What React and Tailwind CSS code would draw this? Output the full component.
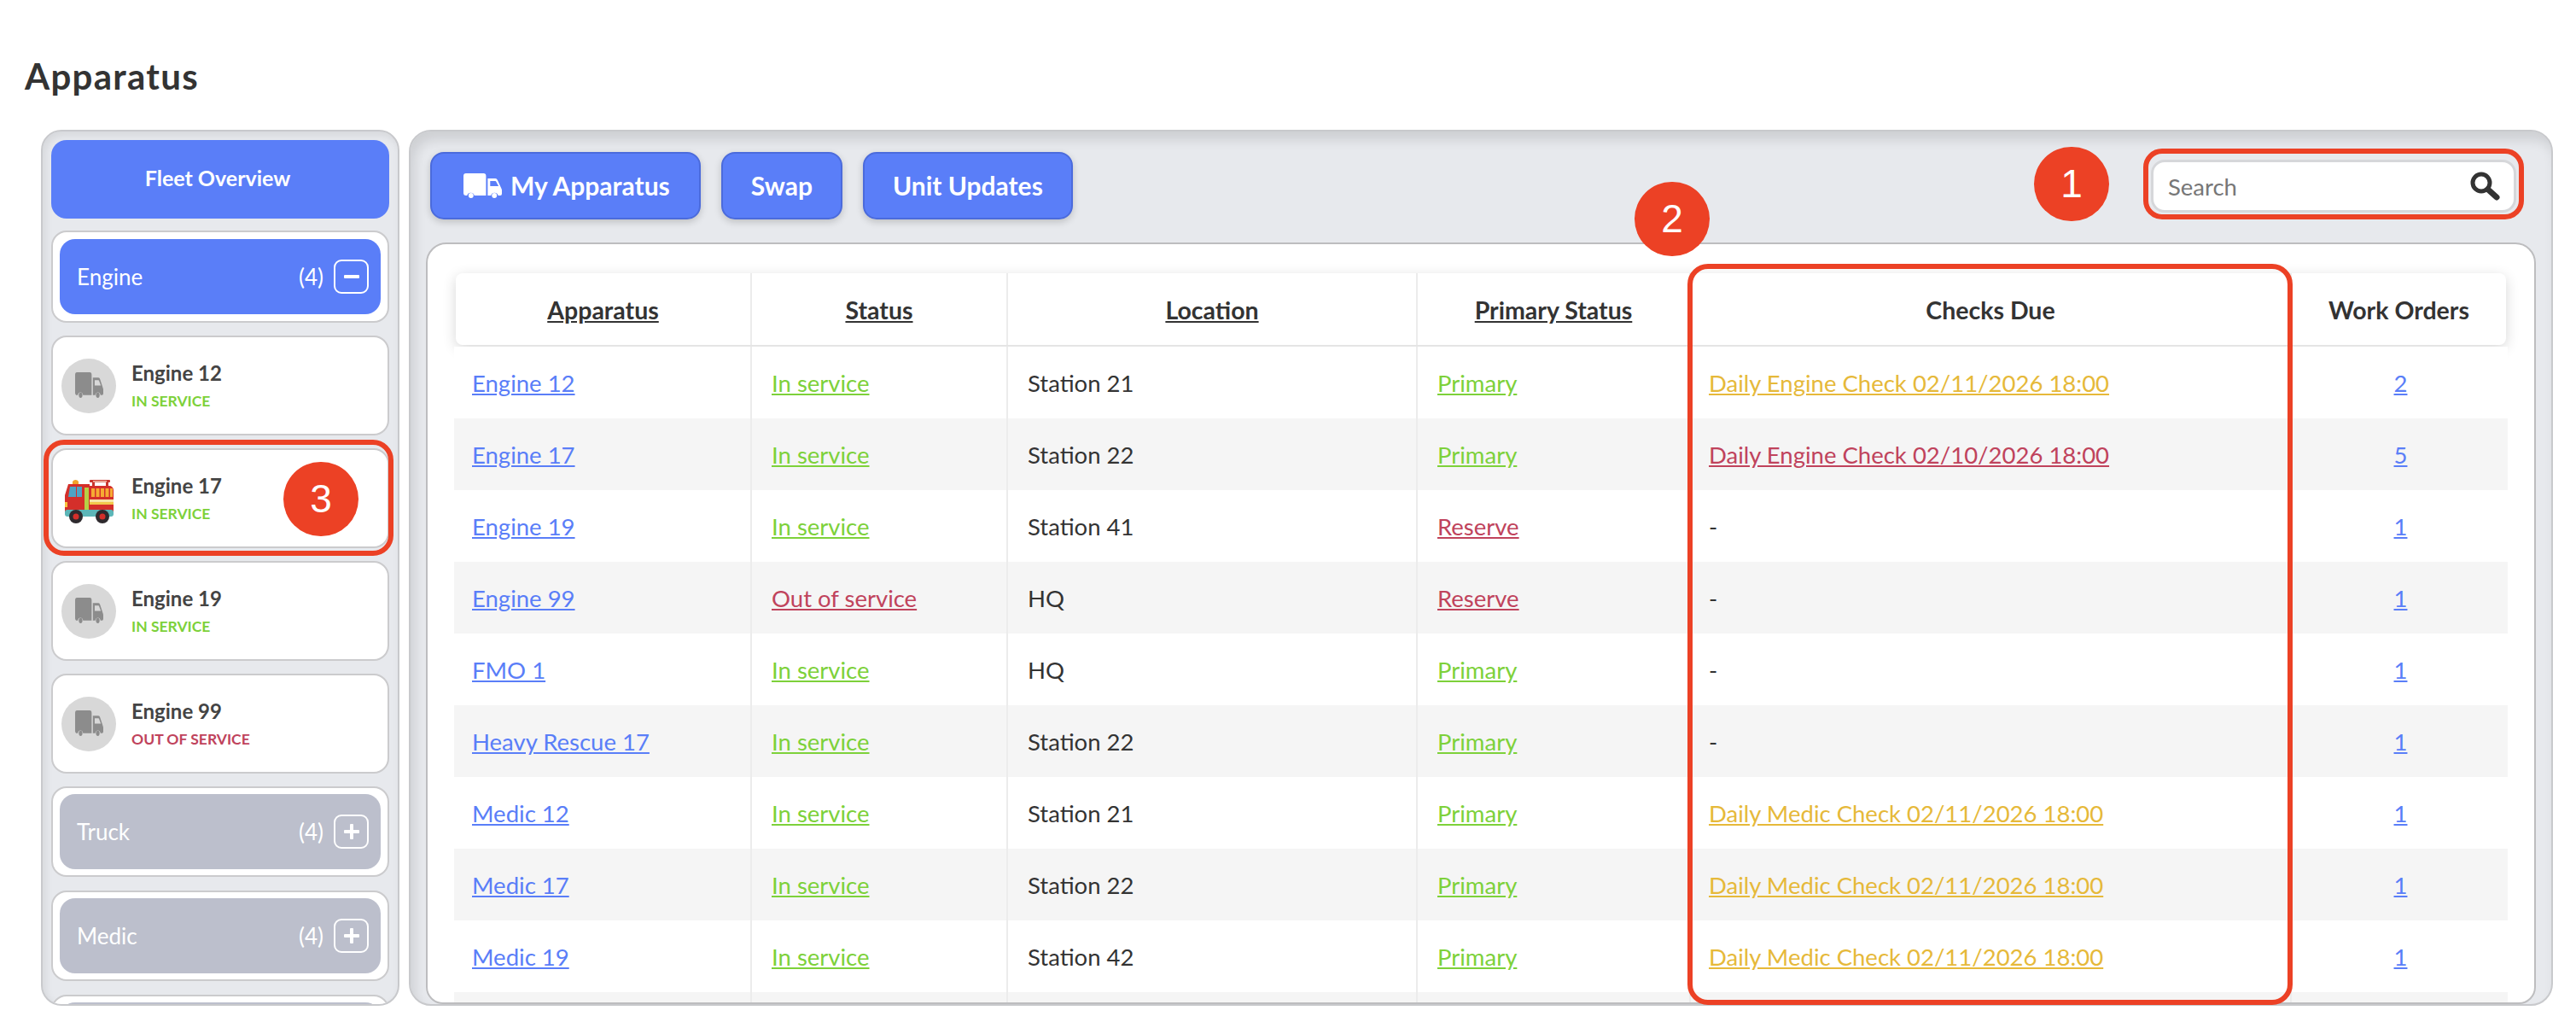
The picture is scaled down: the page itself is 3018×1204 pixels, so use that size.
const blue = "text-[#5a7ef8]";
const green = "text-[#7dd13a]";
const red = "text-[#c0435c]";
const yellow = "text-[#e6b93a]";

const rows = [
  ["Engine 12", "In service", green, "Station 21", "Primary", green, "Daily Engine Check 02/11/2026 18:00", yellow, "2"],
  ["Engine 17", "In service", green, "Station 22", "Primary", green, "Daily Engine Check 02/10/2026 18:00", red, "5"],
  ["Engine 19", "In service", green, "Station 41", "Reserve", red, "-", "", "1"],
  ["Engine 99", "Out of service", red, "HQ", "Reserve", red, "-", "", "1"],
  ["FMO 1", "In service", green, "HQ", "Primary", green, "-", "", "1"],
  ["Heavy Rescue 17", "In service", green, "Station 22", "Primary", green, "-", "", "1"],
  ["Medic 12", "In service", green, "Station 21", "Primary", green, "Daily Medic Check 02/11/2026 18:00", yellow, "1"],
  ["Medic 17", "In service", green, "Station 22", "Primary", green, "Daily Medic Check 02/11/2026 18:00", yellow, "1"],
  ["Medic 19", "In service", green, "Station 42", "Primary", green, "Daily Medic Check 02/11/2026 18:00", yellow, "1"],
];

const TruckIcon = ({ className, fill }) => (
  <svg viewBox="0 0 46 30" preserveAspectRatio="none" className={className} fill={fill}>
    <path d="M3 0h21a3 3 0 0 1 3 3v23H13a4.500 4.500 0 0 0-8.600 0H3a3 3 0 0 1-3-3V3a3 3 0 0 1 3-3z" />
    <circle cx="9" cy="26" r="3" />
    <path fillRule="evenodd" d="M29 6h9a3 3 0 0 1 2.800 2l4.700 10a4 4 0 0 1 .5 2v4a2 2 0 0 1-2 2h-2.500a4.500 4.500 0 0 0-8.600 0H29zM32 9v6h10l-3-5.500a1 1 0 0 0-1-.5z" />
    <circle cx="37" cy="26" r="3" />
  </svg>
);

const FireTruck = () => (
  <svg viewBox="8 6 60 56" className="w-[60px] h-[56px] shrink-0 overflow-visible">
    <path d="M19 14 a4 4 0 0 1 7 0 v3 h-7z" fill="#f2a32c" />
    <rect x="39" y="12" width="24" height="3" rx="1" fill="#c9352c" />
    <rect x="42" y="15" width="3" height="4" fill="#c9352c" />
    <rect x="58" y="15" width="3" height="4" fill="#c9352c" />
    <rect x="43" y="13" width="16" height="1.500" fill="#f4c7b4" />
    <path d="M14 17h25v2h23a5 5 0 0 1 5 5v26H10V30z" fill="#d42f2a" />
    <rect x="10" y="47" width="57" height="8" rx="3" fill="#5cb6b8" />
    <path d="M16 20h7v12h-9z" fill="#4fa3c4" />
    <rect x="24" y="20" width="6" height="12" fill="#4fa3c4" />
    <rect x="33" y="21" width="5" height="26" fill="#b7cf45" />
    <rect x="41" y="22" width="4" height="10" fill="#f6ab33" />
    <rect x="46.500" y="22" width="4" height="10" fill="#f6ab33" />
    <rect x="52" y="22" width="4" height="10" fill="#f6ab33" />
    <rect x="57.500" y="22" width="4" height="10" fill="#f6ab33" />
    <rect x="63" y="22" width="3" height="10" fill="#f6ab33" />
    <rect x="39" y="35" width="28" height="3" fill="#f6e6a8" />
    <rect x="39" y="38" width="28" height="3" fill="#f2c94c" />
    <rect x="10" y="38" width="3" height="6" fill="#f9c23c" />
    <circle cx="23" cy="55" r="8" fill="#2e2a2e" />
    <circle cx="23" cy="55" r="3.500" fill="#d42f2a" />
    <circle cx="54" cy="55" r="8" fill="#2e2a2e" />
    <circle cx="54" cy="55" r="3.500" fill="#d42f2a" />
  </svg>
);

const UnitCard = ({ name, status, color, truck }) => (
  <div className="h-[117px] mb-[15px] mx-[12px] shrink-0 bg-white border-2 border-[#cbcbcd] rounded-[18px] flex items-center pl-[10px]">
    <div className="w-[64px] flex justify-center shrink-0">
      {truck ? (
        <FireTruck />
      ) : (
        <div className="w-[64px] h-[64px] rounded-full bg-[#d8d8d8] flex items-center justify-center">
          <TruckIcon className="w-[33px] h-[31px]" fill="#8c8c8c" />
        </div>
      )}
    </div>
    <div className="ml-[18px]">
      <div className="text-[24px] leading-[30px] font-bold text-[#444]">{name}</div>
      <div className={`mt-[6px] text-[17.5px] leading-[24px] font-bold ${color}`}>{status}</div>
    </div>
  </div>
);

const Group = ({ name, open, grey }) => (
  <div className={`mx-[12px] shrink-0 bg-white border-2 border-[#cbcbcd] rounded-[18px] px-[8px] ${open ? "py-[8px] h-[108px] mb-[15px]" : "py-[7px] h-[106px] mb-[16px]"}`}>
    <div className={`h-full rounded-[18px] flex items-center pl-[20px] pr-[14px] text-white ${grey ? "bg-[#bcbfcc]" : "bg-[#5a7ef8]"}`}>
      <span className="text-[26px] flex-1">{name}</span>
      <span className="text-[26px] mr-[12px]">(4)</span>
      <span className="w-[41px] h-[40px] border-2 border-white rounded-[9px] flex items-center justify-center">
        <svg viewBox="0 0 18 18" className="w-[18px] h-[18px]" fill="white">
          <rect x="0" y="7" width="18" height="4" rx="1" />
          {!open && <rect x="7" y="0" width="4" height="18" rx="1" />}
        </svg>
      </span>
    </div>
  </div>
);

const Marker = ({ className, n }) => (
  <div className={`absolute w-[88px] h-[87px] rounded-full bg-[#ec4125] text-white flex items-center justify-center font-['Liberation_Sans',sans-serif] text-[46px] ${className}`}>
    {n}
  </div>
);

const HeadCell = ({ children, underline, last }) => (
  <div className={`flex items-center justify-center pt-[2px] font-bold text-[#333] text-[28.5px] ${last ? "" : "border-r-2 border-[#ececec]"}`}>
    <span className={underline ? "underline" : ""}>{children}</span>
  </div>
);

const ToolButton = ({ children, className }) => (
  <button className={`h-[79px] bg-[#5a7ef8] border-2 border-[#4b6bdc] rounded-[16px] text-white font-bold text-[30px] flex items-center gap-[10px] shadow-[0_3px_8px_rgba(0,0,0,0.18)] ${className}`}>
    {children}
  </button>
);

export default function App() {
  return (
    <div className="relative w-[3018px] h-[1204px] overflow-hidden bg-white font-[Lato,sans-serif]">
      <h1 className="pl-[29px] pt-[62px] h-[152px] text-[42px] tracking-[1.3px] leading-[55px] font-bold text-[#333]">Apparatus</h1>

      <div className="flex pl-[48px] pr-[27px] gap-[11px] h-[1026px]">
        {/* left list */}
        <div className="w-[420px] h-full shrink-0 overflow-hidden rounded-[24px] border-2 border-[#c8c9cc] bg-[#e7e9ed] shadow-[inset_3px_4px_10px_rgba(0,0,0,0.08)] pt-[10px] flex flex-col">
          <div className="mx-[10px] h-[92px] mb-[14px] shrink-0 rounded-[18px] bg-[#5a7ef8] text-white font-bold text-[25px] flex items-center justify-center pr-[6px] pb-[3px]">
            Fleet Overview
          </div>
          <div className="flex flex-col -mx-[2px]">
            <Group name="Engine" open />
            <UnitCard name="Engine 12" status="IN SERVICE" color={green} />
            <UnitCard name="Engine 17" status="IN SERVICE" color={green} truck />
            <UnitCard name="Engine 19" status="IN SERVICE" color={green} />
            <UnitCard name="Engine 99" status="OUT OF SERVICE" color={red} />
            <Group name="Truck" grey />
            <Group name="Medic" grey />
            <div className="mx-[12px] h-[40px] shrink-0 bg-white border-2 border-[#cbcbcd] rounded-[18px] px-[8px] pt-[7px]">
              <div className="h-[60px] rounded-[18px] bg-[#bcbfcc]" />
            </div>
          </div>
        </div>

        {/* main */}
        <div className="flex-1 min-w-0 h-full overflow-hidden rounded-[26px] border-2 border-[#c8c9cc] bg-[#e7e9ed] shadow-[inset_5px_10px_14px_rgba(0,0,0,0.11)] flex flex-col">
          <div className="h-[130px] shrink-0 flex items-start pl-[23px] pr-[41px] pt-[24px] gap-[24px]">
            <ToolButton className="pl-[37px] pr-[34px]">
              <TruckIcon className="w-[45px] h-[30px]" fill="white" />
              My Apparatus
            </ToolButton>
            <ToolButton className="px-[33px]">Swap</ToolButton>
            <ToolButton className="px-[33px]">Unit Updates</ToolButton>
            <div className="ml-auto mt-[9px] w-[428px] h-[62px] bg-white border-[3px] border-[#d6d7da] rounded-[16px] flex items-center pl-[17px] pr-[16px]">
              <span className="flex-1 pt-[2px] text-[27.5px] text-[#777]">Search</span>
              <svg viewBox="0 0 36 36" className="w-[36px] h-[36px]" fill="none" stroke="#333">
                <circle cx="14" cy="14" r="10" strokeWidth="5" />
                <path d="M22 22l10 9" strokeWidth="7" strokeLinecap="round" />
              </svg>
            </div>
          </div>

          <div className="flex-1 min-h-0 mx-[18px] overflow-hidden bg-white rounded-t-[24px] rounded-b-[20px] border-2 border-[#bdbdbf] px-[31px] pt-[34px]">
            <div className="mx-[2px] h-[84px] mb-[2px] bg-white rounded-[8px] shadow-[0_4px_16px_rgba(0,0,0,0.16)] grid grid-cols-[347px_300px_480px_320px_704px_251px]">
              <HeadCell underline>Apparatus</HeadCell>
              <HeadCell underline>Status</HeadCell>
              <HeadCell underline>Location</HeadCell>
              <HeadCell underline>Primary Status</HeadCell>
              <HeadCell>Checks Due</HeadCell>
              <HeadCell last>Work Orders</HeadCell>
            </div>
            {rows.map((r, i) => (
              <div key={r[0]} className={`h-[84px] text-[27.5px] text-[#333] grid grid-cols-[349px_300px_480px_320px_704px_253px] ${i % 2 ? "bg-[#f5f5f5]" : "bg-white"}`}>
                <div className="flex items-center pt-[2px] pl-[21px] border-r-2 border-[#ececec]"><a className={`underline ${blue}`}>{r[0]}</a></div>
                <div className="flex items-center pt-[2px] pl-[23px] border-r-2 border-[#ececec]"><a className={`underline ${r[2]}`}>{r[1]}</a></div>
                <div className="flex items-center pt-[2px] pl-[23px] border-r-2 border-[#ececec]">{r[3]}</div>
                <div className="flex items-center pt-[2px] pl-[23px] border-r-2 border-[#ececec]"><a className={`underline ${r[5]}`}>{r[4]}</a></div>
                <div className="flex items-center pt-[2px] pl-[21px] border-r-2 border-[#ececec]">
                  {r[7] ? <a className={`underline ${r[7]}`}>{r[6]}</a> : r[6]}
                </div>
                <div className="flex items-center justify-center pt-[2px] pl-[2px]"><a className={`underline ${blue}`}>{r[8]}</a></div>
              </div>
            ))}
            {/* next row, only its first pixels are in view */}
            <div className="h-[84px] bg-[#f5f5f5] grid grid-cols-[349px_300px_480px_320px_704px_253px]">
              <div className="border-r-2 border-[#ececec]" />
              <div className="border-r-2 border-[#ececec]" />
              <div className="border-r-2 border-[#ececec]" />
              <div className="border-r-2 border-[#ececec]" />
              <div className="border-r-2 border-[#ececec]" />
            </div>
          </div>
        </div>
      </div>

      {/* callouts drawn over the screenshot */}
      <div className="absolute left-[2511px] top-[174px] w-[446px] h-[83px] border-[6px] border-[#ec4125] rounded-[22px]" />
      <div className="absolute left-[1977px] top-[309px] w-[709px] h-[868px] border-[6px] border-[#ec4125] rounded-[24px]" />
      <div className="absolute left-[51px] top-[515px] w-[410px] h-[136px] border-[6px] border-[#ec4125] rounded-[24px]" />
      <Marker n="1" className="left-[2383px] top-[172px]" />
      <Marker n="2" className="left-[1915px] top-[213px]" />
      <Marker n="3" className="left-[332px] top-[541px]" />
    </div>
  );
}
